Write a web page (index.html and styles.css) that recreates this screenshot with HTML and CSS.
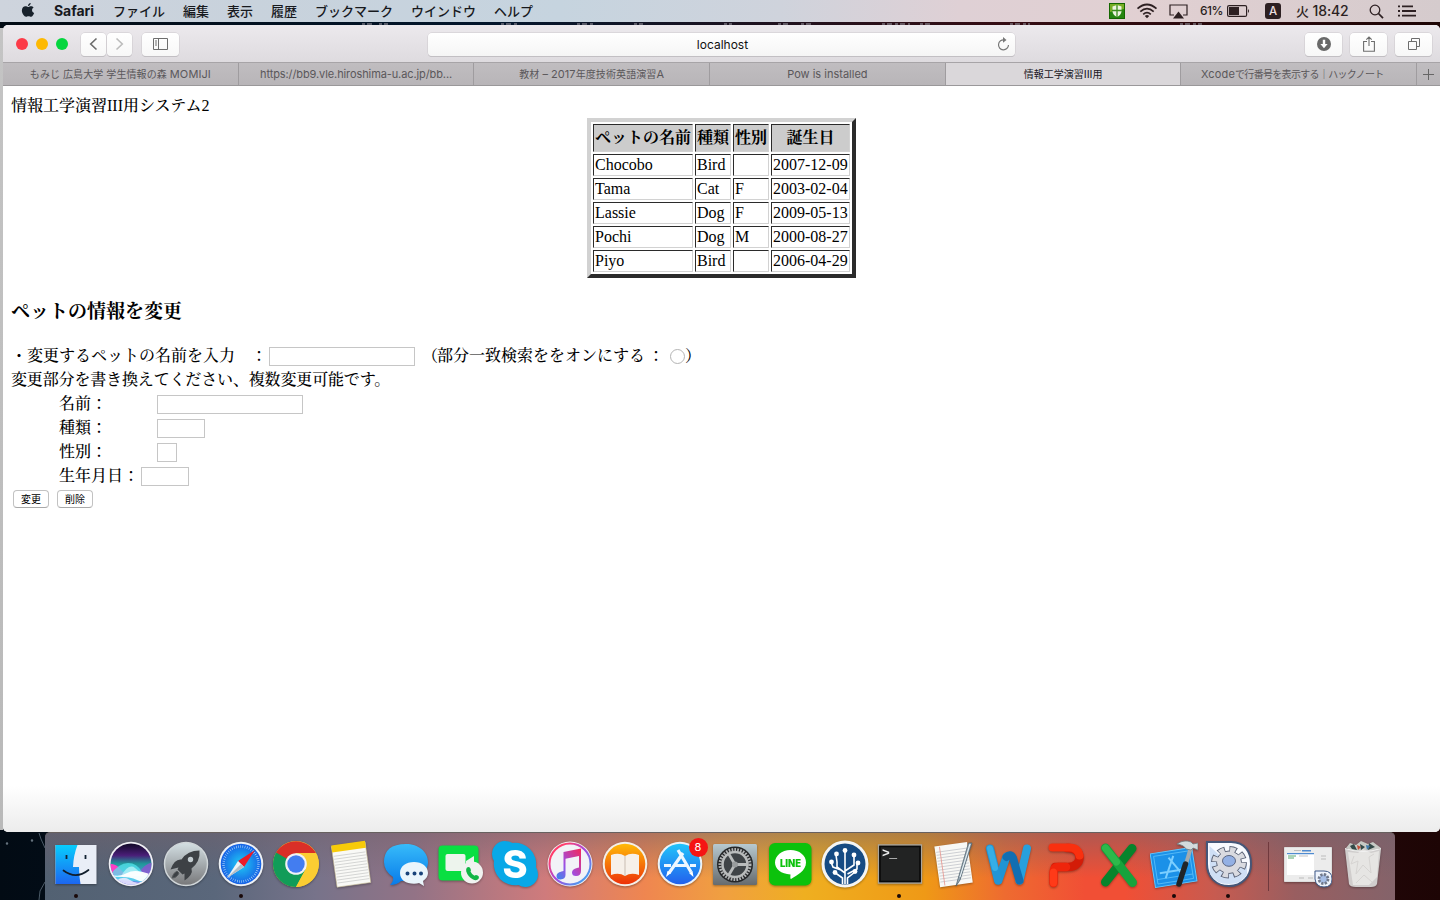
FILE: index.html
```html
<!DOCTYPE html>
<html lang="ja">
<head>
<meta charset="utf-8">
<title>情報工学演習III用</title>
<link rel="stylesheet" href="styles.css">
</head>
<body>
<div class="desktop">
  <svg class="stars" width="1440" height="900" viewBox="0 0 1440 900" fill="none">
    <path d="M39 833l2 6 4 9M45 882l-5 9-1 9" stroke="#4b5a67"/>
    <path d="M7 843.500h0M32 840.500h0" stroke="#66727d" stroke-width="2.500" stroke-linecap="round"/>
    <path d="M362 24h10M379 24h9M501 24h17M577 24h16M634 24h9M724 24h8M778 24h11M801 24h10M882 24h28M920 24h13M1010 24h20M1180 24h22" stroke="#8d8a94" stroke-opacity=".6" stroke-dasharray="3 2 5 3" stroke-width="2"/>
  </svg>
  <header class="menubar">
    <svg class="apple" width="14" height="17" viewBox="0 0 14 18"><path d="M9.900 1c.1 1.600-1.300 3.200-2.900 3.200C6.800 2.600 8.300 1.100 9.900 1zM7.200 5.200c.6 0 1.600-.9 3-.8 1 0 2.100.5 2.800 1.500-2.500 1.500-2.100 4.700.5 5.800-.6 1.800-1.900 4-3.300 4-1 0-1.400-.6-2.700-.6s-1.700.6-2.600.6C3.200 15.700.5 12.400.5 9.100c0-3 1.900-4.600 3.700-4.600 1.300 0 2.200.7 3 .7z"/></svg>
    <nav class="menus"><b class="app">Safari</b><span>ファイル</span><span>編集</span><span>表示</span><span>履歴</span><span>ブックマーク</span><span>ウインドウ</span><span>ヘルプ</span></nav>
    <div class="status">
      <svg class="shield" width="16" height="16" viewBox="0 0 16 16"><rect x=".5" y=".5" width="15" height="15" fill="#258510" stroke="#146600"/><path d="M1 1h14v5L1 9z" fill="#77ad25"/><path d="M3.500 3.500 8 2l4.500 1.500v5Q12 12 8 14 4 12 3.500 8.500z" fill="#edf4df"/><path d="M8 2v12M3 7.500h10" stroke="#3a8c1d" stroke-width="1.300"/></svg>
      <svg class="wifi" width="22" height="16" viewBox="0 0 22 16" fill="none" stroke="#2d2022" stroke-width="1.700"><path d="M1.500 5.700Q11-2.700 20.500 5.700M4.300 8.600Q11 2.700 17.700 8.600M7.200 11.300Q11 8 14.800 11.300"/><path d="m8.800 12.900 2.200 2.300 2.200-2.300Q11 11.200 8.800 12.900z" fill="#2d2022" stroke="none"/></svg>
      <svg class="airplay" width="19" height="15" viewBox="0 0 19 15"><path d="M5 11H1V1h17v10h-4" fill="none" stroke="#2d2022" stroke-width="1.200"/><path d="m9.500 7.500 5.500 7H4z" fill="#2d2022"/></svg>
      <span class="pct">61%</span>
      <svg class="battery" width="23" height="12" viewBox="0 0 23 12"><rect x=".6" y=".6" width="19" height="10.800" rx="1.500" fill="none" stroke="#2d2022" stroke-width="1.200"/><path d="M2 2h10v8H2z" fill="#2d2022"/><path d="M21 4q2 2 0 4z" fill="#2d2022"/></svg>
      <span class="ime">A</span>
      <span class="clock">火 <span class="time">18:42</span></span>
      <svg class="search" width="15" height="15" viewBox="0 0 15 15" fill="none" stroke="#2d2022"><circle cx="6" cy="6" r="4.800" stroke-width="1.300"/><path d="m9.500 9.500 4.500 4.700" stroke-width="1.800"/></svg>
      <svg class="list" width="18" height="12" viewBox="0 0 18 12" stroke="#2d2022" stroke-width="1.800"><path d="M0 1.300h2M4 1.300h11M0 6h2M4 6h14M0 10.700h2M4 10.700h14"/></svg>
    </div>
  </header>

  <main class="window">
    <div class="toolbar">
      <div class="lights"><i class="red"></i><i class="yellow"></i><i class="green"></i></div>
      <div class="navbtns">
        <span class="btn"><svg width="9" height="14" viewBox="0 0 9 14"><path d="M7.500 1.500 1.700 7l5.800 5.500" fill="none" stroke="#6b6b6b" stroke-width="1.600"/></svg></span>
        <span class="btn"><svg width="9" height="14" viewBox="0 0 9 14"><path d="M1.500 1.500 7.300 7l-5.800 5.500" fill="none" stroke="#bcbcbc" stroke-width="1.600"/></svg></span>
      </div>
      <span class="btn sidebtn"><svg width="15" height="12" viewBox="0 0 15 12" fill="none" stroke="#6d6d6d"><path d="M.5.500h14v11H.5zM5.500.500v11M2 3h2M2 5h2M2 7h2"/></svg></span>
      <div class="address"><span>localhost</span><svg class="reload" width="13" height="14" viewBox="0 0 13 14"><path d="M7.300 2.900A5 5 0 1 0 11.500 8" fill="none" stroke="#777" stroke-width="1.200"/><path d="M6 0 9.500 3 6 5.700z" fill="#777"/></svg></div>
      <div class="tools">
        <span class="btn"><svg width="14" height="14" viewBox="0 0 14 14"><circle cx="7" cy="7" r="7" fill="#696969"/><path d="M7 2.800v5" stroke="#fff" stroke-width="2.400"/><path d="M3.400 7h7.200L7 11.200z" fill="#fff"/></svg></span>
        <span class="btn"><svg width="12" height="16" viewBox="0 0 12 16" fill="none" stroke="#6d6d6d" stroke-width="1.100"><path d="M4 5.500H.6v9.700h10.800V5.500H8M6 10V1M3.300 3.700 6 1l2.700 2.700"/></svg></span>
        <span class="btn"><svg width="12" height="12" viewBox="0 0 12 12" fill="none" stroke="#6d6d6d"><path d="M.5 3.500h8v8h-8zM3.500 3.500v-3h8v8h-3"/></svg></span>
      </div>
    </div>
    <div class="tabs">
      <div class="tab"><span class="loose">もみじ 広島大学 学生情報の森 <em>MOMIJI</em></span></div>
      <div class="tab"><em class="url">https://bb9.vle.hiroshima-u.ac.jp/bb...</em></div>
      <div class="tab"><span class="loose">教材 <em>–</em> <em>2017</em>年度技術英語演習<em>A</em></span></div>
      <div class="tab"><em class="pow">Pow is installed</em></div>
      <div class="tab active"><span>情報工学演習<em>III</em>用</span></div>
      <div class="tab last"><span class="tight"><em>Xcode</em>で行番号を表示する｜ハックノート</span></div>
      <div class="newtab"><svg width="11" height="11" viewBox="0 0 11 11"><path d="M5.500 0v11M0 5.500h11" stroke="#666"/></svg></div>
    </div>

    <div class="page">
      <div class="title">情報工学演習<span class="lat">III</span>用システム<span class="lat">2</span></div>
      <table class="pets">
        <colgroup><col class="c1"><col class="c2"><col class="c2"><col class="c4"></colgroup>
        <tr><th>ペットの名前</th><th>種類</th><th>性別</th><th>誕生日</th></tr>
        <tr><td>Chocobo</td><td>Bird</td><td></td><td>2007-12-09</td></tr>
        <tr><td>Tama</td><td>Cat</td><td>F</td><td>2003-02-04</td></tr>
        <tr><td>Lassie</td><td>Dog</td><td>F</td><td>2009-05-13</td></tr>
        <tr><td>Pochi</td><td>Dog</td><td>M</td><td>2000-08-27</td></tr>
        <tr><td>Piyo</td><td>Bird</td><td></td><td>2006-04-29</td></tr>
      </table>
      <h3>ペットの情報を変更</h3>
      <form>
        <div class="row"><label class="find">・変更するペットの名前を入力　：</label><input class="long"><label class="partial"><span class="paren">（</span>部分一致検索ををオンにする</label><label class="colon">：</label><input type="radio" class="radio"><label>）</label></div>
        <div class="row"><label class="note">変更部分を書き換えてください、複数変更可能です。</label></div>
        <div class="row in"><label class="wide">名前：</label><input class="long"></div>
        <div class="row in"><label class="wide">種類：</label><input class="short"></div>
        <div class="row in"><label class="wide">性別：</label><input class="tiny"></div>
        <div class="row in"><label class="birth">生年月日：</label><input class="short"></div>
        <div class="buttons"><button type="button">変更</button><button type="button">削除</button></div>
      </form>
    </div>
  </main>

  <footer class="dock">
    <div class="slot run"><svg viewBox="0 0 48 48"><defs><linearGradient id="fb" x2="0" y2="1"><stop stop-color="#08cdfd"/><stop offset="1" stop-color="#1c66f0"/></linearGradient></defs><path d="M3.500 5h41v39h-41z" fill="#e9eef7"/><path d="M3.500 5h22q-4 10-4.500 22h6q0 9 1.500 17h-25z" fill="url(#fb)"/><path d="M14.500 15v4M33.500 15v4" stroke="#123" stroke-width="1.800"/><path d="M11.500 30.500Q24 40 36.500 30" fill="none" stroke="#111e2c" stroke-width="1.700" stroke-linecap="round"/></svg></div>
    <div class="slot"><svg viewBox="0 0 48 48"><defs><linearGradient id="si" x2="0" y2="1"><stop offset=".1" stop-color="#170b30"/><stop offset=".32" stop-color="#4a1e78"/><stop offset=".5" stop-color="#1f9a9a"/><stop offset=".75" stop-color="#5f8fe8"/><stop offset="1" stop-color="#6c5fe0"/></linearGradient><clipPath id="sic"><circle cx="24" cy="24" r="20.500"/></clipPath></defs><circle cx="24" cy="24" r="22.300" fill="#f0f0f5"/><g clip-path="url(#sic)"><path d="M0 0h48v48H0z" fill="url(#si)"/><path d="M0 24q9-1 13 5l6 6H0z" fill="#fb3fc4"/><path d="M48 22q-9 1-13 7l-8 7h21z" fill="#8f55cf" opacity=".8"/><path d="M3 35q9-12 18-12t14 9q5 5 11 3-4 8-12 7T3 39z" fill="#54e6ee" opacity=".75"/><path d="M14 36q8-13 14-8t9 8z" fill="#d7fbff" opacity=".6"/><path d="M2 34q10 4 18-1t25 2q-7 9-15 5T3 37z" fill="#fff" opacity=".95"/><path d="M9 41q7-6 14-1t15 1l-12 5z" fill="#f0eaff" opacity=".85"/></g></svg></div>
    <div class="slot"><svg viewBox="0 0 48 48"><defs><linearGradient id="ro" x2="0" y2="1"><stop stop-color="#d4e0e4"/><stop offset="1" stop-color="#777779"/></linearGradient></defs><circle cx="24" cy="24" r="21.500" fill="url(#ro)" stroke="#d0d6d9" stroke-width="1.500"/><path d="M37.500 10.500q-12 0-18 9-7-1-11 10l8-2-1 2 5 5 2-1v7q9-6 7-12 9-7 8-18z" fill="#3d4145"/><circle cx="28.500" cy="19.500" r="2.700" fill="#c4cdd1"/><path d="M15 31q-4 2-5 7 5 0 7-5z" fill="#3d4145" stroke="#55595c"/></svg></div>
    <div class="slot run"><svg viewBox="0 0 48 48"><defs><radialGradient id="sa"><stop stop-color="#20cdf5"/><stop offset="1" stop-color="#1660e5"/></radialGradient></defs><circle cx="24" cy="24" r="22.300" fill="#eef1f5"/><circle cx="24" cy="24" r="20.300" fill="url(#sa)"/><circle cx="24" cy="24" r="17.500" fill="none" stroke="#d2edff" stroke-width="2.500" stroke-dasharray=".5 1.700"/><path d="m38 10-17 11 6 6z" fill="#ec1b28"/><path d="m10 38 11-17 6 6z" fill="#eef2f4"/><path d="m10 38 14-14 3 3z" fill="#b3bdc5"/></svg></div>
    <div class="slot"><svg viewBox="0 0 48 48"><circle cx="24" cy="24" r="23" fill="#fbcd32"/><path d="M4.100 12.500A23 23 0 0 1 43.900 13H24L13.500 28z" fill="#d92f27"/><path d="M4.100 12.500A23 23 0 0 0 24 47l9.500-17.500L24 24z" fill="#119c58"/><path d="M24 13h19.900A23 23 0 0 1 24 47l9.500-17.500z" fill="#fbcd32"/><circle cx="24" cy="24" r="10.800" fill="#f2f2f5"/><circle cx="24" cy="24" r="8.700" fill="#437df0"/></svg></div>
    <div class="slot"><svg viewBox="0 0 48 48"><g transform="rotate(-8 24 24)"><path d="M7 4h34v41H7z" fill="#f9f9f6" stroke="#c7bd96" stroke-width=".6"/><path d="M7 3h34v7H7z" fill="#f7cb09"/><path d="M8 14h32M8 17h32M8 20h32M8 23h32M8 26h32M8 29h32M8 32h32M8 35h32M8 38h32M8 41h32" stroke="#cecfce" stroke-width=".8"/></g></svg></div>
    <div class="slot"><svg viewBox="0 0 48 48"><defs><linearGradient id="ms" x2="0" y2="1"><stop stop-color="#37bbfa"/><stop offset="1" stop-color="#087be9"/></linearGradient></defs><path d="M24 4c12 0 22 7.500 22 18S36 41 24 41h-5q-4 4-11 4 4-4 3-8Q2 31 2 22 2 4 24 4z" fill="url(#ms)"/><path d="M32 22c8 0 14 4.500 14 11 0 3-2 6-5 8l1 5-5-3q-2 .8-5 .8c-8 0-14-4-14-10.800S24 22 32 22z" fill="#eaf5fc"/><path d="M25.500 33.500h0M32.500 33.500h0M39 33.500h0" stroke="#18427a" stroke-width="4" stroke-linecap="round"/></svg></div>
    <div class="slot"><svg viewBox="0 0 48 48"><rect x="1.500" y="5.500" width="40" height="35" rx="4" fill="#09df42"/><rect x="8.500" y="14" width="20" height="17" rx="2" fill="#edf4ed"/><path d="m29 21 8-5v12l-8-5z" fill="#ecf2ec"/><circle cx="35" cy="32.500" r="11" fill="#f1f2f0"/><path d="M30 27.500q2-1.500 3.300.8t.2 3.200q1.200 3 4 4.200 1.200-1.400 3.200-.2t1 3q-2 3-6 .8-5-2.800-6.500-8-.4-2.600.8-3.800z" fill="#11b646"/></svg></div>
    <div class="slot"><svg viewBox="0 0 48 48"><path d="M13.500 1q5 0 8 2A21.300 21.300 0 0 1 45 27q2 4 2 7.500A12.500 12.500 0 0 1 34.500 47q-4 0-7-2A21.300 21.300 0 0 1 3 21q-2-3-2-7A13 13 0 0 1 13.500 1z" fill="#08a8e7"/><text x="24" y="37.500" class="skype">S</text></svg></div>
    <div class="slot"><svg viewBox="0 0 48 48"><defs><linearGradient id="it" x2="1" y2="1"><stop offset=".2" stop-color="#ff3e6d"/><stop offset=".5" stop-color="#a747dd"/><stop offset="1" stop-color="#28baf5"/></linearGradient><linearGradient id="nt" x1="1" x2="0" y2="1"><stop stop-color="#f62757"/><stop offset=".6" stop-color="#9c50e5"/><stop offset="1" stop-color="#378bea"/></linearGradient></defs><circle cx="24" cy="24" r="22.500" fill="#f3eef4"/><circle cx="24" cy="24" r="20.500" fill="#f2f3f7" stroke="url(#it)" stroke-width="2"/><path d="M17.500 12 35 8.500V31q0 5-5 5-4 0-4-3.500t5-4.500l2-.5V16l-13.500 2.700V35q0 4-5 4.500-4 0-4-3.500t5-4.500l2-.5z" fill="url(#nt)"/></svg></div>
    <div class="slot"><svg viewBox="0 0 48 48"><defs><linearGradient id="bo" x2="0" y2="1"><stop stop-color="#ffba08"/><stop offset="1" stop-color="#ed3109"/></linearGradient></defs><circle cx="24" cy="24" r="22.300" fill="#f5efe8"/><circle cx="24" cy="24" r="20.300" fill="url(#bo)"/><path d="M10 15q8-3 14 1 6-4 14-1v20q-8-3-14 1-6-4-14-1z" fill="#f6f0e9"/><path d="M24 16v20" stroke="#c9bdb2" stroke-width="1"/></svg></div>
    <div class="slot"><svg viewBox="0 0 48 48"><defs><linearGradient id="as" x2="0" y2="1"><stop stop-color="#22c4fa"/><stop offset="1" stop-color="#2260ed"/></linearGradient></defs><circle cx="24" cy="24" r="22.300" fill="#eef2f5"/><circle cx="24" cy="24" r="20.300" fill="url(#as)"/><g fill="none" stroke="#eef7ff" stroke-width="3.200"><path d="M27 13 13 33M22 10l13 22M8 25.500h7M19 25.500h11M34 25.500h6"/></g><path d="m11.500 31 3.500 2-5 4zM33 33l3.500-2 1 6z" fill="#fff"/></svg><span class="badge">8</span></div>
    <div class="slot"><svg viewBox="0 0 48 48"><defs><linearGradient id="sy" x2="0" y2="1"><stop stop-color="#b7c9d0"/><stop offset="1" stop-color="#666b6e"/></linearGradient></defs><rect x="2" y="4" width="44" height="41" rx="1.500" fill="url(#sy)"/><circle cx="24" cy="24.500" r="18" fill="#252729"/><circle cx="24" cy="24.500" r="15" fill="none" stroke="#b1b4b5" stroke-width="3" stroke-dasharray="1.700 1.200"/><circle cx="24" cy="24.500" r="12.500" fill="#3f4447" stroke="#b9bcbc" stroke-width="2.500"/><path d="M24 24.500H37M24 24.500l-6.500-11M24 24.500l-6.500 11" stroke="#b9bcbc" stroke-width="2.800"/><circle cx="24" cy="24.500" r="3" fill="#999d9e"/></svg></div>
    <div class="slot"><svg viewBox="0 0 48 48"><rect x="3" y="3" width="42.500" height="42.500" rx="6" fill="#0cc20c"/><path d="M24.500 10c9 0 15.500 5.500 15.500 12.500C40 31 31 35 25 39q-1 0-.5-4.500C15 34 9 29 9 22.500S15.500 10 24.500 10z" fill="#fff"/><text x="24.500" y="26.500" class="linetext" textLength="21" lengthAdjust="spacingAndGlyphs">LINE</text></svg></div>
    <div class="slot"><svg viewBox="0 0 48 48"><circle cx="24" cy="24" r="23.500" fill="#f5f5f3"/><circle cx="24" cy="24" r="20.500" fill="#164b83"/><g fill="none" stroke="#fff" stroke-width="1.600"><path d="M24 44V12M21.500 44v-6l-7-5M26.500 44v-6l7.500-6M24 33l-8-6v-5l-1-7M24 31l9-6v-9M20 30l-8-3-2-5M26.500 34l9.500-5v-5"/></g><g fill="#fff"><circle cx="24" cy="10.500" r="2.400"/><circle cx="15.500" cy="14" r="2.400"/><circle cx="33" cy="15" r="2.400"/><circle cx="10.500" cy="22" r="2.400"/><circle cx="37" cy="23" r="2.400"/><circle cx="14" cy="32.500" r="2.400"/><circle cx="34" cy="31.500" r="2.400"/></g></svg></div>
    <div class="slot run"><svg viewBox="0 0 48 48"><path d="M2.500 5h43v38h-43z" fill="#222323" stroke="#aaa69d" stroke-width="1.300"/><path d="M4 6.500h40v35H4z" fill="none" stroke="#090909" stroke-width="1.500"/><text x="6" y="17" class="term" textLength="15">&gt;_</text></svg></div>
    <div class="slot"><svg viewBox="0 0 48 48"><g transform="rotate(-8 24 24)"><path d="M7 4h33v41H7z" fill="#f8f8f5"/><path d="M8 10h31M8 13h31M8 16h31M8 19h31M8 22h31M8 25h31M8 28h31M8 31h31M8 34h31M8 37h31M8 40h31" stroke="#c5c8cd" stroke-width=".8"/><path d="M12 5v39" stroke="#e79790" stroke-width=".8"/></g><path d="M38.500 3 28 39l-2 7 4-6L42 3z" fill="#9aaab6" stroke="#526470" stroke-width=".8"/><path d="M40 4 30 37" stroke="#edf6fa"/></svg></div>
    <div class="slot"><svg viewBox="0 0 48 48"><g fill="none" stroke-linecap="round" stroke-linejoin="round" stroke-width="8"><path d="m34.500 40.500 7.500-32" stroke="#27a0dd"/><path d="m13.500 40.500 8-24" stroke="#1f94d4"/><path d="M21.500 17q4-4 6.500 1l6.500 22.500" stroke="#126eb2"/><path d="m5 8.500 8 32" stroke="#2295d6"/><path d="M5 8.500 10 28" stroke="#35aee6" stroke-width="6"/></g></svg></div>
    <div class="slot"><svg viewBox="0 0 48 48"><g fill="none" stroke-linecap="round" stroke-linejoin="round"><path d="M27 8c16-1 17 19 1 19H15" stroke="#d31c08" stroke-width="8.500"/><path d="M12.500 7.500H29q9 0 10.500 8" stroke="#f9300f" stroke-width="8"/><path d="M26 27H18q-4.500 0-4.500 5v11" stroke="#ef250b" stroke-width="8.500"/><path d="M13.500 43V32" stroke="#ff3a18" stroke-width="7"/></g></svg></div>
    <div class="slot"><svg viewBox="0 0 48 48"><g fill="none" stroke-linecap="round" stroke-width="9"><path d="M37 8.500 10.500 42" stroke="#07842c"/><path d="m10.500 8 27 34.500" stroke="#17a33c"/><path d="m10.500 8 11 14" stroke="#2db94b" stroke-width="7"/></g></svg></div>
    <div class="slot run"><svg viewBox="0 0 48 48"><g transform="rotate(-9 23 27)"><path d="M2.500 10.500h42v34h-42z" fill="#1b91e8" stroke="#61c7ff"/><path d="M5.500 13.500h36v28h-36zM5.500 37h36" fill="none" stroke="#66c7fb" stroke-width=".7"/><path d="m14 37 11-21M20 17l12 20M9 31h26" fill="none" stroke="#7ccfff" stroke-width="2"/></g><path d="m41 7-5 17" stroke="#a3abaf" stroke-width="4"/><path d="M35.500 24 29 44" stroke="#202528" stroke-width="5.500" stroke-linecap="round"/><path d="M27 4q7-5 14-2l2 2 5-1v7l-5-2-2 2-5-1q-2-4-9-5z" fill="#d3dadd" stroke="#717d83" stroke-width=".8"/></svg></div>
    <div class="slot run"><svg viewBox="0 0 48 48"><path d="M2 2h24c14 0 20 10 20 22s-9 22-22 22S2 37 2 24z" fill="#f8faff" stroke="#455779" stroke-width="2"/><path d="M4.500 6 22 22l20 2v10q-5 10-18 10T5 34z" fill="#cfdff5"/><g transform="translate(0 2) scale(1 .9)"><circle cx="24" cy="22.500" r="14.500" fill="none" stroke="#596175" stroke-width="7" stroke-dasharray="7 4.388"/><circle cx="24" cy="22.500" r="12.500" fill="#d9dae0" stroke="#596175"/><circle cx="24" cy="22.500" r="14" fill="none" stroke="#d9dae0" stroke-width="6" stroke-dasharray="5.200 5.796" stroke-dashoffset="-.7"/><ellipse cx="24" cy="21" rx="6.500" ry="6" fill="#93b0e4" stroke="#56617b"/></g></svg></div>
    <div class="divider"></div>
    <div class="slot"><svg viewBox="0 0 48 48"><path d="M.5 7.500h47v34h-47z" fill="#ececec" stroke="#ddd"/><path d="M3 13h27v22H3z" fill="#fff"/><path d="M3 13h27v1.300H3zM18 10h9v1.500h-9z" fill="#4f8bd0"/><path d="M4 16h8M4 18h6" stroke="#58a871"/><path d="M15 16h9M37 16h5M37 19h5M15 38h5M24 38h5M10 10.500h7" stroke="#aaa" stroke-width=".7"/><path d="M31 31h9q8 0 8 8t-8 8-9-8z" fill="#eff4fc" stroke="#405a89"/><circle cx="39.500" cy="39" r="4.500" fill="#a6bee6" stroke="#71798a" stroke-width="2.800" stroke-dasharray="2.200 1.300"/></svg></div>
    <div class="slot"><svg viewBox="0 0 48 48"><path d="M6 9h36l-4 35q-1 3-6 3H17q-6 0-7-3z" fill="#d6d5d4" opacity=".95"/><path d="m9 12 10 1 5-4 8 4 8-2-2 26-8 8H14z" fill="#e6e5e3"/><path d="m15 16-3 8 7-3-2 13 7-9 8 8-2-16 5-3M17 43l8-8 8 7" fill="none" stroke="#d6d4d2"/><path d="m7 8 4-5 6 2 5-4 7 3 5-2 4 3 4 3-9 3-9-2-8 3z" fill="#c7cac5"/><path d="m11 6 4-2 3 6-5-1zm10-2 5 3-4 3zm9-1 6 4-7 3z" fill="#344948"/><path d="m18 5 4 2-3 3z" fill="#c64d37"/><path d="m27 5 4 1-3 4z" fill="#3f7bad"/><path d="M6 8.500q18 6 36 0" fill="none" stroke="#f2f2f2"/></svg></div>
  </footer>
</div>
</body>
</html>
```
FILE: styles.css
```css
* { box-sizing: border-box; }
html, body { margin: 0; }
body { width: 1440px; height: 900px; overflow: hidden; font-family: Inter, "Noto Sans CJK JP", sans-serif; }
svg { display: block; flex: none; }

.desktop {
  position: relative; width: 1440px; height: 900px; display: flex; flex-direction: column; overflow: hidden;
  background:
    linear-gradient(#c4c4c4, #b9b9b9) 0 28px / 3px 802px no-repeat,
    linear-gradient(90deg, #020b14 0, #03162c 500px, #24111c 820px, #350d14 1000px, #1d0505 1440px);
}
.stars { position: absolute; inset: 0; }
.menubar, .window, .dock { position: relative; }

.menubar {
  height: 22px; flex: none; display: flex; align-items: center; padding-left: 21px;
  background: linear-gradient(90deg, #ced4dd 0, #c8d2dc 250px, #c6d4df 560px, #cfd3dc 780px, #dfd0d5 960px, #e1d0d2 1150px, #d5cbcd 1440px);
  color: #17191d; font-size: 13px; font-weight: 500; line-height: 22px;
}
.apple { fill: #17212b; margin-top: -1px; }
.menus { display: flex; gap: 18px; margin-left: 19px; white-space: nowrap; }
.menus .app { width: 41px; font-weight: 700; font-size: 14px; letter-spacing: -.05px; }
.status { display: flex; align-items: center; margin-left: auto; width: 331px; color: #2b1f21; }
.wifi { margin-left: 11px; }
.airplay { margin-left: 11px; margin-top: 1px; }
.pct { width: 27px; margin-left: 12px; font-size: 12px; letter-spacing: -.5px; }
.battery { margin-left: 0; }
.ime { width: 16px; height: 16px; margin-left: 15px; border-radius: 3px; background: #2d2022; color: #eadddf; line-height: 16px; text-align: center; font-size: 11.500px; }
.clock { width: 56px; margin-left: 15px; white-space: nowrap; }
.time { font-size: 14px; letter-spacing: -.1px; }
.search { margin-left: 17px; }
.list { margin-left: 14px; }

.window { width: 1437px; height: 807px; margin: 3px 0 0 3px; flex: none; display: flex; flex-direction: column; overflow: hidden; border-radius: 5px; background: #fff; }
.toolbar { height: 37px; flex: none; display: flex; align-items: center; padding: 1px 8px 0 13px; background: linear-gradient(#ece9ed, #dedbdf); }
.lights { display: flex; gap: 8px; }
.lights i { width: 12px; height: 12px; border-radius: 50%; }
.red { background: #fc3b48; }
.yellow { background: #fdb902; }
.green { background: #05d63f; }
.btn { width: 38px; height: 23px; display: flex; align-items: center; justify-content: center; border-radius: 4px; background: linear-gradient(#fff, #f7f7f7); box-shadow: 0 0 0 .5px #cbc8cc, 0 1px 0 #b9b6ba; }
.navbtns { display: flex; gap: 1px; margin-left: 13px; }
.navbtns .btn { width: 25px; }
.sidebtn { margin-left: 10px; width: 37px; }
.address { width: 587px; height: 23px; margin-left: 249px; display: grid; grid-template-columns: 1fr auto; align-items: center; border-radius: 4px; background: linear-gradient(#fff, #f5f5f5); box-shadow: 0 0 0 .5px #cbc8cc, 0 1px 0 #b9b6ba; font-size: 12px; text-align: center; color: #111; padding-right: 5px; }
.address span { padding-left: 20px; }
.reload { margin-top: -1px; }
.tools { display: flex; gap: 8px; margin-left: auto; }
.tools .btn { width: 37px; }

.tabs { height: 24px; flex: none; display: flex; border-top: 1px solid #a7a4a7; border-bottom: 1px solid #9a989a; background: linear-gradient(#c0bdc0, #b8b5b8); color: #5a575a; }
.tab { width: 235.700px; display: flex; justify-content: center; align-items: center; border-right: 1px solid #9f9c9f; font-size: 10px; line-height: 22px; white-space: nowrap; }
.tab em { font-style: normal; font-size: 11px; letter-spacing: -.1px; }
.tab .url { letter-spacing: -.1px; }
.tab .pow { letter-spacing: 0; }
.tab .loose { letter-spacing: .1px; }
.tab .loose em { letter-spacing: .1px; }
.tab.last { padding-right: 13px; }
.tab .tight { letter-spacing: -.68px; }
.tab .tight em { letter-spacing: .15px; }
.active { background: #dad7da; color: #20181f; }
.newtab { flex: 1; display: flex; align-items: center; justify-content: center; }

.page { flex: 1; padding: 7px 8px 0; color: #000; font: 500 16px/24px "Liberation Serif", "Noto Serif CJK JP", "Noto Sans CJK JP", serif; background: linear-gradient(#fff0 700px, #ececec 100%); }
.title { height: 25px; line-height: 25px; }
.pets { width: 269px; height: 160px; margin: 0 auto; table-layout: fixed; border-collapse: separate; border-spacing: 2px; border: 4px solid; border-color: #d2d2d2 #2b2b2b #2b2b2b #d2d2d2; line-height: 20px; }
.c1 { width: 100px; }
.c2 { width: 36px; }
.c4 { width: 79px; }
.pets th, .pets td { height: 22px; padding: 0 1px; border: 1px solid; border-color: #2b2b2b #d2d2d2 #d2d2d2 #2b2b2b; white-space: nowrap; text-align: left; }
.pets td { font-weight: 400; }
.pets th { height: 28px; background: #ccc; text-align: center; font-weight: 700; }
.page h3 { margin: 22px 0 20px; height: 24px; font-size: 19px; line-height: 24px; font-weight: 700; }
.row { display: flex; height: 24px; white-space: nowrap; }
.row label { flex: none; line-height: 23.500px; }
.in { padding-left: 48px; }
.find { width: 256px; }
.wide { width: 96px; }
.birth { width: 80px; }
.note { letter-spacing: -.15px; }
.page input { appearance: none; flex: none; height: 19px; margin: 3px 2px 0; padding: 0; border: 1px solid #c6c6c6; background: #fff; }
.page .long { width: 146px; }
.page .short { width: 48px; }
.page .tiny { width: 20px; }
.partial { margin-left: 4px; }
.partial .paren { display: inline-block; width: 16px; transform: translateX(1px); }
.colon { margin-left: 3px; }
.page .radio { width: 15px; height: 15px; margin: 5px 0 0 6px; border-radius: 50%; border-color: #b4b4b4; }
.buttons { display: flex; gap: 8px; padding: 2px 2px 0; }
.buttons button { width: 36px; height: 18px; padding: 0; border: 1px solid #c2c2c2; border-bottom-color: #a9a9a9; border-radius: 4px; background: #fff; color: #000; font: 10px/14px "Noto Sans CJK JP", sans-serif; }

.dock {
  width: 1350px; height: 68px; margin: 0 0 0 45px; padding-left: 4px; flex: none; display: flex; border-radius: 5px 5px 0 0; border-top: 1px solid #67605f;
  background: linear-gradient(#72606b80, #72606b00 45px), linear-gradient(90deg, #526172 0, #5a677b 170px, #77738a 270px, #937386 370px, #cf7b7c 500px, #ef8650 600px, #f0a040 680px, #efaf20 760px, #ef9916 880px, #ee6b30 960px, #f14f35 1040px, #f14f35 1080px, #c75b50 1170px, #995e60 1250px, #84636a 1350px);
}
.slot { width: 54.880px; flex: none; position: relative; display: flex; justify-content: center; padding-top: 7px; }
.slot svg { width: 48px; height: 48px; filter: drop-shadow(0 1px 1px #0005); }
.run::after { content: ""; position: absolute; top: 61px; left: 25px; width: 4px; height: 4px; border-radius: 50%; background: #190909; }
.badge { position: absolute; top: 5px; right: 0; width: 19px; height: 19px; border-radius: 50%; background: #f51414; color: #fff; font-size: 11px; line-height: 19px; text-align: center; }
.linetext { font: 900 10px Inter, sans-serif; fill: #0cc20c; text-anchor: middle; }
.skype { font: 800 38px Inter, sans-serif; fill: #fff; text-anchor: middle; }
.term { font: bold 13px "Liberation Mono", monospace; fill: #eee; }
.divider { width: 24.700px; flex: none; }
.divider::before { content: ""; display: block; width: 1px; height: 49px; margin: 9px 0 0 12px; background: #70393d; }
```
